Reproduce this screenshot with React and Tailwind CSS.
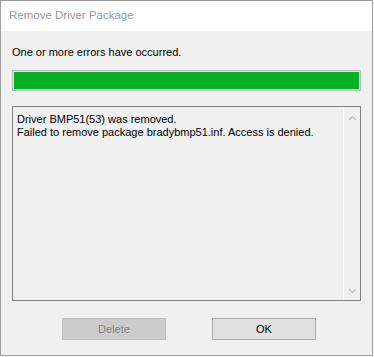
import React from 'react';

const font = { fontFamily: '"Liberation Sans", Arial, sans-serif' };

const Chevron = ({ down }) => (
    <svg width="9" height="6" viewBox="0 0 9 6" className="block">
        <path
            d={down ? 'M1 1 L4.5 4.5 L8 1' : 'M1 5 L4.5 1.5 L8 5'}
            fill="none"
            stroke="#c2c2c2"
            strokeWidth="1.3"
        />
    </svg>
);

export default function App() {
    return (
        <div className="w-[374px] h-[357px] bg-white" style={font}>
            <div className="w-[373px] h-[356px] border border-[#9b9b9b] flex flex-col bg-[#f0f0f0]">
                {/* title bar */}
                <div className="h-[30px] bg-white flex items-center pl-[8px] text-[11.5px] text-[#999999]">
                    Remove Driver Package
                </div>

                <div className="flex-1 flex flex-col px-[11px]">
                    <div className="mt-[14px] text-[11px] leading-[14px] text-black">
                        One or more errors have occurred.
                    </div>

                    <div className="mt-[11px] h-[21px] border border-[#bcbcbc] bg-[#e6e6e6] p-px">
                        <div className="h-full w-full bg-[#06b025]" />
                    </div>

                    <div className="mt-[15px] h-[195px] border border-[#828282] flex">
                        <div className="flex-1 pl-[4px] pt-[6px] text-[11px] leading-[13px] text-black whitespace-nowrap">
                            <div>Driver BMP51(53) was removed.</div>
                            <div>Failed to remove package bradybmp51.inf. Access is denied.</div>
                        </div>
                        <div className="w-[17px] border-l border-white flex flex-col items-center justify-between pt-[8px] pb-[6px]">
                            <Chevron />
                            <Chevron down />
                        </div>
                    </div>

                    <div className="mt-[17px] ml-[50px] flex gap-[46px]">
                        <button className="w-[104px] h-[22px] border border-[#bfbfbf] bg-[#cccccc] text-[11px] text-[#838383]">
                            Delete
                        </button>
                        <button className="w-[104px] h-[22px] border border-[#adadad] bg-[#e1e1e1] text-[11px] text-black">
                            OK
                        </button>
                    </div>
                </div>
            </div>
        </div>
    );
}
